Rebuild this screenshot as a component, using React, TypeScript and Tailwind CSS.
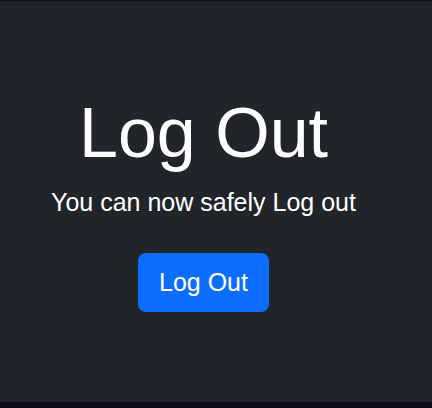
export default function App() {
  return (
    <div className="flex h-[408px] w-[432px] flex-col font-['Liberation_Sans',Arial,sans-serif] text-white">
      <div className="h-px bg-[#12131a]" />
      <main className="flex flex-1 bg-[#212529]">
        <div className="flex w-[407px] flex-col items-center pt-[90px]">
          <h1 className="text-[70px] leading-[84px] font-normal">Log Out</h1>
          <p className="mt-[9px] text-[25px] leading-[37.5px]">You can now safely Log out</p>
          <button
            type="button"
            className="mt-[31px] rounded-lg bg-[#0d6efd] px-[21px] py-[11px] text-[25px] leading-[37.5px] text-white"
          >
            Log Out
          </button>
        </div>
      </main>
      <div className="h-[6px] bg-[#0e0c19]" />
    </div>
  )
}
